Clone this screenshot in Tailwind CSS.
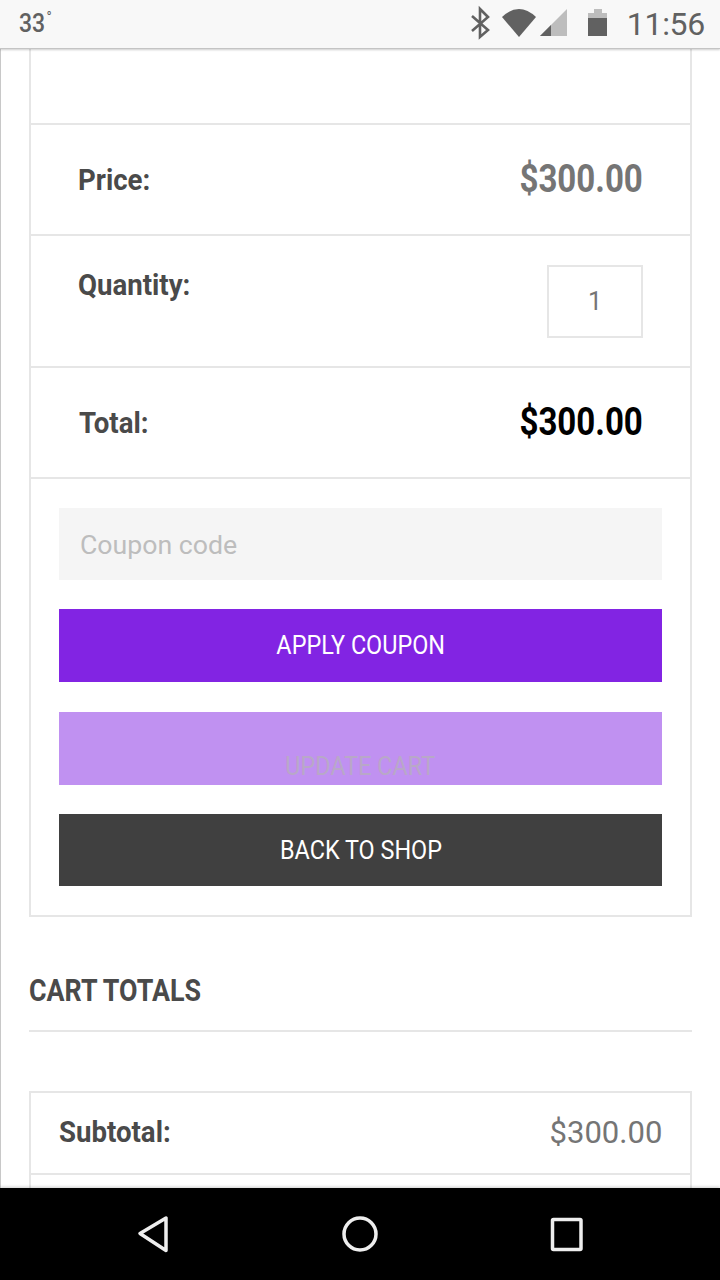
<!DOCTYPE html>
<html>
<head>
<meta charset="utf-8">
<script src="https://cdn.jsdelivr.net/npm/@tailwindcss/browser@4"></script>
</head>
<body class="m-0 bg-white">
<div class="relative w-[720px] h-[1280px] overflow-hidden bg-white font-['Roboto',sans-serif] flex flex-col">
  <div class="relative h-[49px] shrink-0 bg-[#f8f8f8] border-b border-[#c4c4c4] shadow-[0_1px_2px_rgba(0,0,0,0.2)] flex items-center justify-between pl-[19px] pr-[15px] text-[#616161] z-10">
    <div class="flex items-start text-[25px] font-medium leading-none pb-[2px]"><span class="inline-block origin-left scale-x-[0.92]">33</span><span class="text-[14px] font-normal ml-[-1px] mt-[-1px]">°</span></div>
    <div class="flex items-center">
      <svg width="145" height="48" viewBox="465 0 145 48" class="mr-[18px]">
        <path d="M473 16 L489 30 L481 37 V9 L489 17 L473 31" fill="none" stroke="#616161" stroke-width="2.6"/>
        <path d="M503 17 Q520 1 537 17 L520 37 Z" fill="#616161"/>
        <path d="M541 36 L568 9 V36 Z" fill="#bdbdbd"/>
        <path d="M541 36 L552 25 V36 Z" fill="#616161"/>
        <path d="M589 13 H595 V9 H603 V13 H608 V18 H589 Z" fill="#bdbdbd"/>
        <rect x="589" y="18" width="19" height="18" fill="#616161"/>
      </svg>
      <div class="text-[32px] leading-none text-[#616161] tracking-[-0.3px]">11:56</div>
    </div>
  </div>
  <div class="flex-1 border-l border-[#c8c8c8] pl-[28px] pr-[28px]">
    <div class="border-x-2 border-b-2 border-[#e6e6e6]">
      <div class="h-[76px] border-b-2 border-[#e6e6e6]"></div>
      <div class="h-[111px] border-b-2 border-[#e6e6e6] flex items-center justify-between pl-[47px] pr-[47px]">
        <span class="text-[30px] font-bold text-[#4a4a4a] origin-left scale-x-[0.92] inline-block">Price:</span>
        <span class="text-[38px] font-bold text-[#757575] origin-right scale-x-[0.87] inline-block">$300.00</span>
      </div>
      <div class="h-[132px] border-b-2 border-[#e6e6e6] flex justify-between pl-[47px] pr-[48px]">
        <span class="text-[30px] font-bold text-[#4a4a4a] origin-left scale-x-[0.92] inline-block mt-[32px] h-[34px] leading-[34px]">Quantity:</span>
        <div class="mt-[29px] mr-[-1px] w-[96px] h-[73px] border-2 border-[#e6e6e6] flex items-center justify-center text-[25px] text-[#757575] pt-[1px]">1</div>
      </div>
      <div class="h-[111px] border-b-2 border-[#e6e6e6] flex items-center justify-between pl-[48px] pr-[47px]">
        <span class="text-[30px] font-bold text-[#4a4a4a] origin-left scale-x-[0.92] inline-block">Total:</span>
        <span class="text-[38px] font-bold text-black origin-right scale-x-[0.87] inline-block">$300.00</span>
      </div>
      <div class="pt-[29px] px-[28px] pb-[29px] flex flex-col">
        <div class="h-[72px] bg-[#f5f5f5] flex items-center pl-[21px] pt-[2px] text-[26.7px] text-[#bdbdbd]">Coupon code</div>
        <div class="mt-[29px] h-[73px] bg-[#8224e3] flex items-center justify-center text-white text-[26px]"><span class="scale-x-[0.9] inline-block">APPLY COUPON</span></div>
        <div class="mt-[30px] h-[73px] bg-[#c091f1] flex items-end justify-center text-[#b8a8c8] text-[26px] overflow-hidden"><span class="scale-x-[0.9] inline-block mb-[-1px]">UPDATE CART</span></div>
        <div class="mt-[29px] h-[72px] bg-[#404040] flex items-center justify-center text-white text-[26px]"><span class="scale-x-[0.9] inline-block">BACK TO SHOP</span></div>
      </div>
    </div>
    <div class="mt-[54px] pb-[19px] border-b-2 border-[#e6e6e6] text-[31px] font-bold text-[#4a4a4a] leading-[40px]"><span class="origin-left scale-x-[0.865] inline-block">CART TOTALS</span></div>
    <div class="mt-[59px] border-2 border-b-0 border-[#e6e6e6]">
      <div class="h-[82px] border-b-2 border-[#e6e6e6] flex justify-between pl-[28px] pr-[28px]">
        <span class="text-[30px] font-bold text-[#4a4a4a] origin-left scale-x-[0.92] inline-block leading-[36px] mt-[21px] h-[36px]">Subtotal:</span>
        <span class="text-[32px] text-[#757575] origin-right scale-x-[0.97] inline-block leading-[36px] mt-[21px] h-[36px]">$300.00</span>
      </div>
      <div class="h-[40px]"></div>
    </div>
  </div>
  <div class="absolute left-0 right-0 bottom-0 h-[92px] bg-black shadow-[0_-1px_3px_rgba(0,0,0,0.2)] flex items-center">
    <svg width="720" height="92" viewBox="0 0 720 92" fill="none" stroke="#eeeeee" stroke-width="3.5" stroke-linejoin="round">
      <path d="M166 30 V62.5 L140 45.5 Z"/>
      <circle cx="360" cy="46" r="16"/>
      <rect x="552.5" y="31.5" width="28.5" height="30" rx="1"/>
    </svg>
  </div>
</div>
</body>
</html>
